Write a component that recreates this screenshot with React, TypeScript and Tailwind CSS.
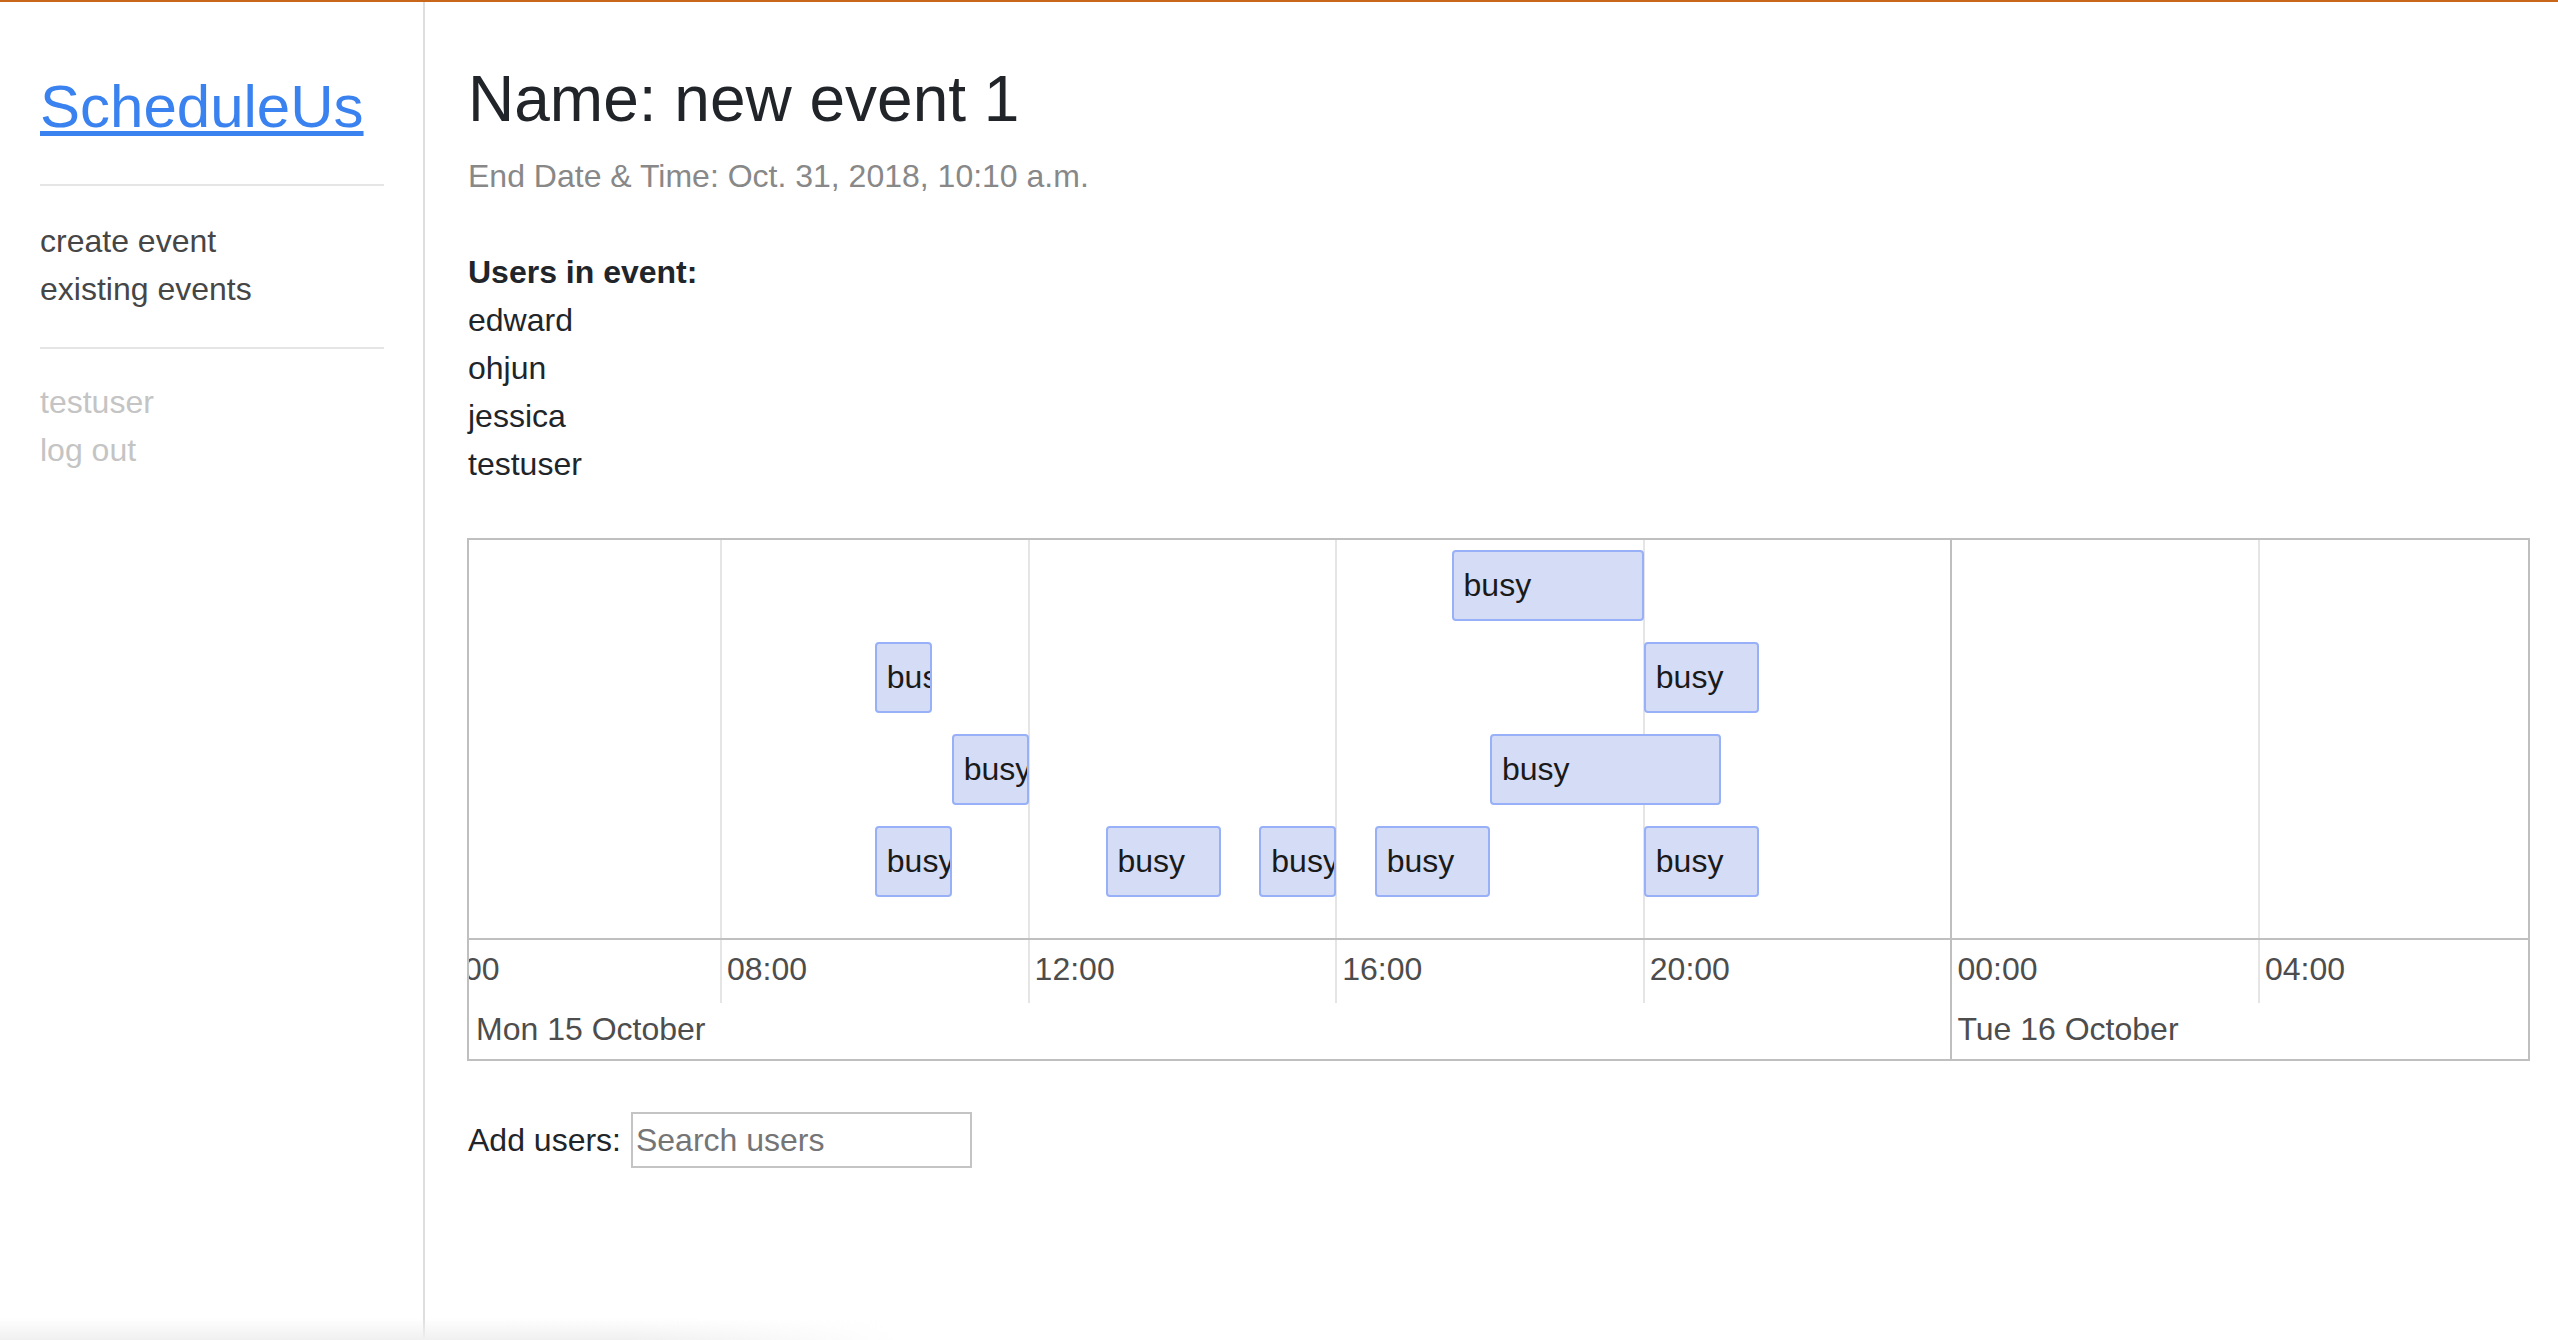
const HOUR = 76.9;
const ORIGIN = 252; // x of 08:00 inside the timeline, in px

const hx = (h: number) => ORIGIN + (h - 8) * HOUR;

const busy = [
  { row: 0, start: 17.5, end: 20 },
  { row: 1, start: 10, end: 10.75 },
  { row: 1, start: 20, end: 21.5 },
  { row: 2, start: 11, end: 12 },
  { row: 2, start: 18, end: 21 },
  { row: 3, start: 10, end: 11 },
  { row: 3, start: 13, end: 14.5 },
  { row: 3, start: 15, end: 16 },
  { row: 3, start: 16.5, end: 18 },
  { row: 3, start: 20, end: 21.5 },
];

const ticks = [
  { hour: 4, label: "04:00" },
  { hour: 8, label: "08:00" },
  { hour: 12, label: "12:00" },
  { hour: 16, label: "16:00" },
  { hour: 20, label: "20:00" },
  { hour: 24, label: "00:00", major: true },
  { hour: 28, label: "04:00" },
];

const users = ["edward", "ohjun", "jessica", "testuser"];

function Sidebar() {
  return (
    <aside className="flex w-[425px] shrink-0 flex-col border-r-2 border-[#dedede] pl-[40px] pr-[39px] pt-[69px]">
      <a
        href="#"
        className="text-[60px] leading-[72px] text-[#3a82ef] underline decoration-[5px] underline-offset-[4px]"
      >
        ScheduleUs
      </a>
      <div className="mt-[41px] h-[2px] bg-[#e5e5e5]" />
      <nav className="mt-[31px] flex flex-col text-[32px] leading-[48px] text-[#464646]">
        <a href="#">create event</a>
        <a href="#">existing events</a>
      </nav>
      <div className="mt-[34px] h-[2px] bg-[#e5e5e5]" />
      <div className="mt-[29px] flex flex-col text-[32px] leading-[48px] text-[#c4c4c4]">
        <span>testuser</span>
        <a href="#">log out</a>
      </div>
    </aside>
  );
}

function Timeline() {
  return (
    <div className="mt-[50px] w-full border-2 border-[#bfbfbf]">
      <div className="relative h-[398px] overflow-hidden">
        {ticks.map((t) => (
          <div
            key={`g${t.hour}`}
            className={`absolute top-0 h-full w-[2px] ${t.major ? "bg-[#bfbfbf]" : "bg-[#e5e5e5]"}`}
            style={{ left: hx(t.hour) - 1 }}
          />
        ))}
        {busy.map((b, i) => (
          <div
            key={i}
            className="absolute h-[71px] overflow-hidden whitespace-nowrap rounded-[4px] border-2 border-[#97b0f8] bg-[#d5ddf6] pl-[10px] text-[32px] leading-[67px] text-[#1a1a1a]"
            style={{ top: 10 + b.row * 92, left: hx(b.start), width: (b.end - b.start) * HOUR }}
          >
            busy
          </div>
        ))}
      </div>
      <div className="relative h-[121px] overflow-hidden border-t-2 border-[#bfbfbf] text-[32px] leading-[48px] text-[#4d4d4d]">
        {ticks.map((t) => (
          <div key={`a${t.hour}`}>
            <div
              className={`absolute top-0 w-[2px] ${t.major ? "h-full bg-[#bfbfbf]" : "h-[63px] bg-[#e5e5e5]"}`}
              style={{ left: hx(t.hour) - 1 }}
            />
            <span className="absolute top-[5px] whitespace-nowrap" style={{ left: hx(t.hour) + 6 }}>
              {t.label}
            </span>
          </div>
        ))}
        <span className="absolute left-[7px] top-[65px] whitespace-nowrap">Mon 15 October</span>
        <span className="absolute top-[65px] whitespace-nowrap" style={{ left: hx(24) + 6 }}>
          Tue 16 October
        </span>
      </div>
    </div>
  );
}

export default function App() {
  return (
    <div className="relative flex h-screen flex-col overflow-hidden bg-white font-['Liberation_Sans',Arial,sans-serif]">
      <div className="h-[2px] shrink-0 bg-[#c8661a]" />
      <div className="flex flex-1">
        <Sidebar />
        <main className="flex min-w-0 flex-1 flex-col pl-[42px] pr-[28px] pt-[59px] text-[#212529]">
          <h1 className="pl-[1px] text-[64px] leading-[77px]">Name: new event 1</h1>
          <p className="mt-[14px] pl-[1px] text-[32px] leading-[48px] text-[#888888]">
            End Date &amp; Time: Oct. 31, 2018, 10:10 a.m.
          </p>
          <div className="mt-[48px] pl-[1px] text-[32px] leading-[48px]">
            <p className="font-bold">Users in event:</p>
            {users.map((u) => (
              <p key={u}>{u}</p>
            ))}
          </div>

          <Timeline />

          <div className="mt-[51px] flex items-center gap-[10px] pl-[1px] text-[32px] leading-[48px]">
            <span>Add users:</span>
            <input
              type="text"
              placeholder="Search users"
              className="h-[56px] w-[341px] border-2 border-[#c4c4c4] px-[3px] text-[32px] outline-none placeholder:text-[#757575]"
            />
          </div>
        </main>
      </div>
      <div className="pointer-events-none absolute bottom-0 left-0 h-[22px] w-[900px] bg-gradient-to-t from-[#f0f0f0] to-transparent [mask-image:linear-gradient(to_right,black_70%,transparent)]" />
    </div>
  );
}
